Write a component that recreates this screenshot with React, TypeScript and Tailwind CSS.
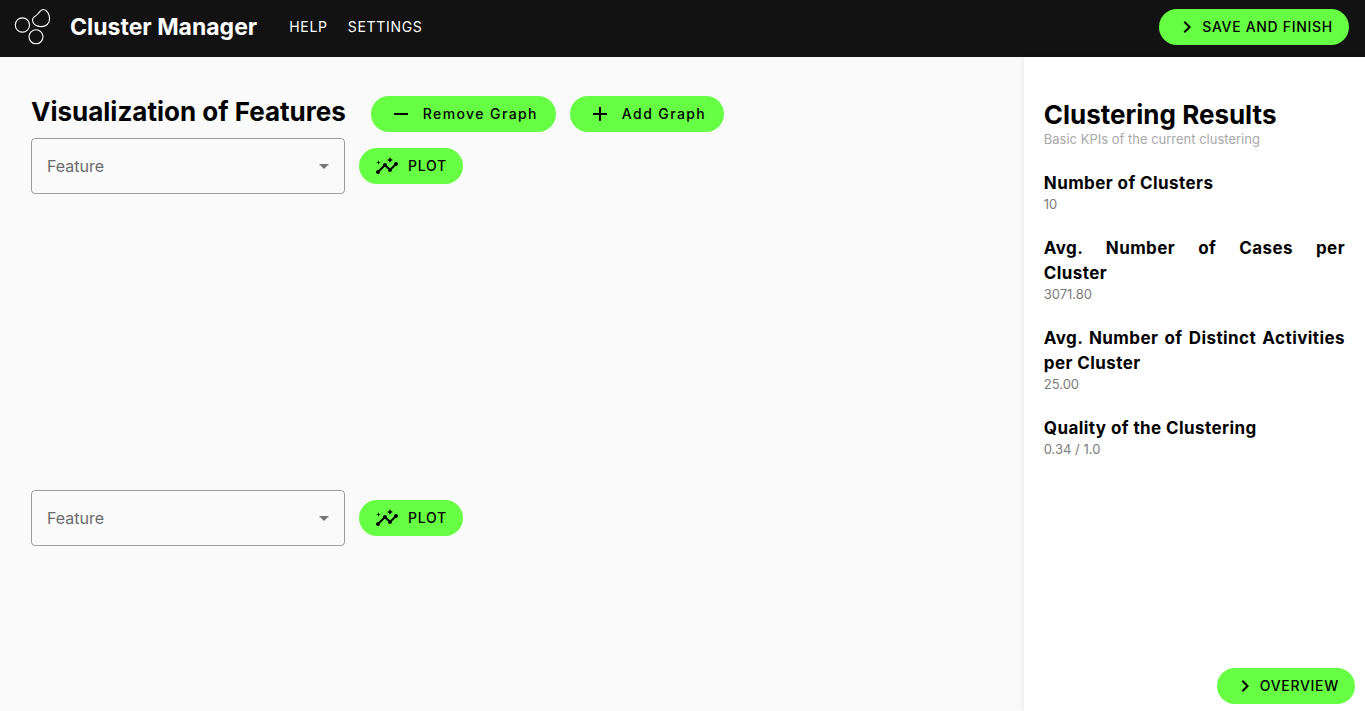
import type { ReactNode } from "react";
import { MdAdd, MdArrowDropDown, MdChevronRight, MdInsights, MdRemove } from "react-icons/md";

type PillProps = { icon: ReactNode; children: ReactNode; className?: string };

function Pill({ icon, children, className = "" }: PillProps) {
  return (
    <button
      type="button"
      className={`flex h-9 shrink-0 items-center whitespace-nowrap rounded-full bg-[#66ff44] text-sm font-medium text-black hover:bg-[#5bea3c] ${className}`}
    >
      {icon}
      <span>{children}</span>
    </button>
  );
}

function Logo() {
  return (
    <svg viewBox="0 0 40 40" className="size-10" fill="none" stroke="white" strokeWidth="1.1" aria-hidden="true">
      <circle cx="9.4" cy="18" r="7.1" />
      <circle cx="23" cy="29.8" r="7" />
      <path d="M19.5 13.4C19.1 9.7 22.7 9.6 24.8 7C26.7 4.6 28 2.4 30.4 2.5C34 2.7 36.5 7.3 36.6 11.6C36.7 16.5 32.9 19.7 28.2 19.6C23.6 19.5 20 17.4 19.5 13.4Z" />
    </svg>
  );
}

function FeaturePlot({ index }: { index: number }) {
  return (
    <section className="min-h-[352px]">
      <div className="flex items-center gap-3.5">
        <div className="relative w-full max-w-[314px]">
          <select
            aria-label={`Feature ${index}`}
            defaultValue=""
            className="h-14 w-full appearance-none rounded border border-[#9b9b9b] bg-transparent px-[15px] text-base text-[#6b6b6b]"
          >
            <option value="">Feature</option>
          </select>
          <MdArrowDropDown className="pointer-events-none absolute inset-y-0 right-[9px] my-auto size-6 text-[#757575]" />
        </div>
        <Pill icon={<MdInsights className="size-6" />} className="gap-[9px] px-4 tracking-wider">
          PLOT
        </Pill>
      </div>
    </section>
  );
}

const kpis = [
  { lines: ["Number of Clusters"], value: "10" },
  { lines: ["Avg. Number of Cases per", "Cluster"], value: "3071.80" },
  { lines: ["Avg. Number of Distinct Activities", "per Cluster"], value: "25.00" },
  { lines: ["Quality of the Clustering"], value: "0.34 / 1.0" },
];

export default function App() {
  return (
    <div className="flex h-screen flex-col bg-[#fafafa] font-['Inter',sans-serif] text-black">
      <header className="flex h-[57px] shrink-0 items-center bg-[#121212] pl-[13px] pr-4 pb-[3px] text-white">
        <Logo />
        <h1 className="ml-[17px] text-[23px] font-bold">Cluster Manager</h1>
        <nav className="ml-8 flex gap-5 text-sm tracking-wider">
          <a href="#help">HELP</a>
          <a href="#settings">SETTINGS</a>
        </nav>
        <Pill icon={<MdChevronRight className="size-6" />} className="ml-auto gap-[3px] px-4 tracking-wider">
          SAVE AND FINISH
        </Pill>
      </header>

      <div className="flex min-h-0 flex-1">
        <main className="min-w-0 flex-1 overflow-hidden px-[31px] pt-[39px]">
          <div className="mb-1.5 flex items-start">
            <h2 className="mr-[25px] whitespace-nowrap text-[26px] leading-8 font-bold">
              Visualization of Features
            </h2>
            <div className="flex gap-3.5">
              <Pill icon={<MdRemove className="size-6" />} className="gap-2.5 px-[18px] tracking-widest">
                Remove Graph
              </Pill>
              <Pill icon={<MdAdd className="size-6" />} className="gap-2.5 px-[18px] tracking-widest">
                Add Graph
              </Pill>
            </div>
          </div>
          <FeaturePlot index={1} />
          <FeaturePlot index={2} />
        </main>

        <aside className="flex w-1/4 flex-col bg-white pt-[42px] pb-[7px] shadow-[0_0_8px_rgba(0,0,0,0.08)]">
          <div className="px-5">
            <h2 className="text-[26px] leading-8 font-bold">Clustering Results</h2>
            <p className="text-[13px] leading-4 text-[#a8a8a8]">Basic KPIs of the current clustering</p>
            <dl className="mt-6 flex flex-col gap-6">
              {kpis.map((kpi) => (
                <div key={kpi.lines[0]}>
                  <dt className="text-[17px] leading-[25px] font-bold tracking-wide">
                    {kpi.lines.map((line) => (
                      <span
                        key={line}
                        className="block text-justify not-last:[text-align-last:justify]"
                      >
                        {line}{" "}
                      </span>
                    ))}
                  </dt>
                  <dd className="text-[13px] leading-4 text-[#7b7b7b]">{kpi.value}</dd>
                </div>
              ))}
            </dl>
          </div>
          <Pill icon={<MdChevronRight className="size-6" />} className="mt-auto mr-2.5 gap-[3px] self-end px-4 tracking-wider">
            OVERVIEW
          </Pill>
        </aside>
      </div>
    </div>
  );
}
